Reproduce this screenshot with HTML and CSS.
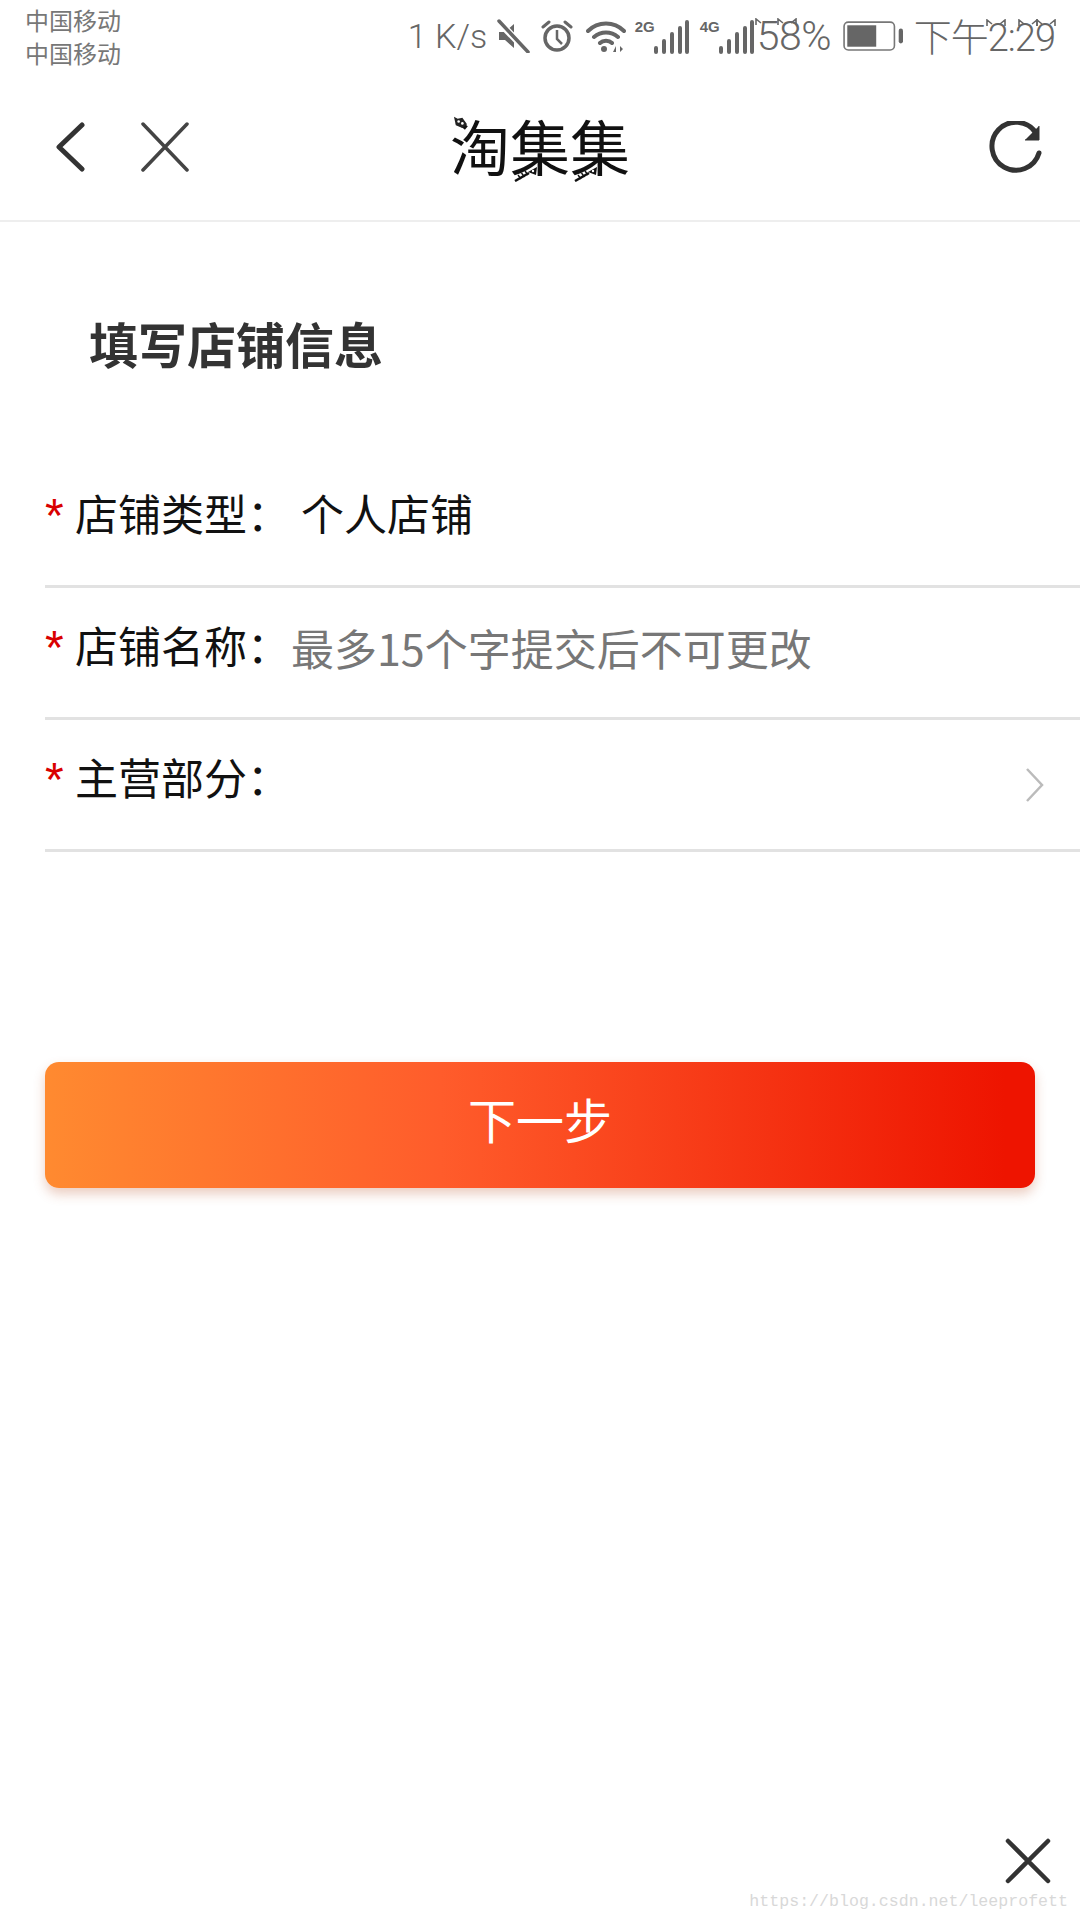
FILE: index.html
```html
<!DOCTYPE html>
<html lang="zh">
<head>
<meta charset="utf-8">
<title>淘集集</title>
<link rel="stylesheet" href="styles.css">
</head>
<body>
<div class="page">
  <div class="statusbar">
    <div class="carriers"><div>中国移动</div><div>中国移动</div></div>
    <div class="status-right">
      <span class="speed">1 K/s</span>
      <svg class="ic-mute" viewBox="0 0 34 34"><path d="M3 13h6l9-8v24l-9-8H3z" fill="#666"/><path d="M2 2l30 31" stroke="#fff" stroke-width="7"/><path d="M3 2l29 31" stroke="#666" stroke-width="3.5" stroke-linecap="round"/></svg>
      <svg class="ic-alarm" viewBox="0 0 32 32"><circle cx="16" cy="18" r="12" fill="none" stroke="#666" stroke-width="3.5"/><path d="M16 10v9l5 5" fill="none" stroke="#666" stroke-width="2.5"/><path d="M2 7l6-5M30 7l-6-5" stroke="#666" stroke-width="3" stroke-linecap="round"/></svg>
      <svg class="ic-wifi" viewBox="0 0 40 34"><path d="M2 12c10-10 26-10 36 0M8 18c7-6 17-6 24 0M14 24c3-3 9-3 12 0" fill="none" stroke="#666" stroke-width="4" stroke-linecap="round"/><circle cx="18" cy="30" r="3" fill="#666"/><path d="M27 33l3-6v6zM34 27v6l3-3z" fill="#666"/></svg>
      <span class="signal"><span class="net">2G</span><svg class="ic-bars" viewBox="0 0 36 34"><path d="M3 28v4M11 21v11M19 14v18M27 8v24M34 2v30" stroke="#666" stroke-width="4" stroke-linecap="round"/></svg></span>
      <span class="signal"><span class="net">4G</span><svg class="ic-bars" viewBox="0 0 36 34"><path d="M3 28v4M11 21v11M19 14v18M27 8v24M34 2v30" stroke="#666" stroke-width="4" stroke-linecap="round"/></svg></span>
      <span class="percent">58%
        <svg class="ears ear-8" viewBox="0 0 20 8"><path d="M1 7V1l5 4M19 7V1l-5 4" fill="none" stroke="#666" stroke-width="1.6"/></svg>
        <svg class="ears ear-5" viewBox="0 0 20 8"><path d="M1 7V1l5 4" fill="none" stroke="#666" stroke-width="1.6"/></svg>
      </span>
      <svg class="ic-battery" viewBox="0 0 56 28"><rect x="1" y="1" width="47" height="26" rx="4" fill="none" stroke="#777" stroke-width="1.5"/><rect x="4" y="4" width="27" height="20" fill="#666"/><rect x="52" y="7" width="4" height="14" rx="2" fill="#666"/></svg>
      <span class="time">下午2:29
        <svg class="ears ear-t1" viewBox="0 0 20 8"><path d="M1 7V1l5 4M19 7V1l-5 4" fill="none" stroke="#666" stroke-width="1.6"/></svg>
        <svg class="ears ear-t2" viewBox="0 0 20 8"><path d="M1 7V1l5 4M19 7V1l-5 4" fill="none" stroke="#666" stroke-width="1.6"/></svg>
        <svg class="ears ear-t3" viewBox="0 0 20 8"><path d="M1 7V1l5 4M19 7V1l-5 4" fill="none" stroke="#666" stroke-width="1.6"/></svg>
      </span>
    </div>
  </div>

  <header class="navbar">
    <div class="nav-left">
      <svg class="ic-back" viewBox="0 0 30 50"><path d="M27 3L4 25l23 22" fill="none" stroke="#333" stroke-width="5" stroke-linecap="round" stroke-linejoin="round"/></svg>
      <svg class="ic-close" viewBox="0 0 48 50"><path d="M2 2l44 46M46 2L2 48" stroke="#444" stroke-width="3.5" stroke-linecap="round"/></svg>
    </div>
    <h1 class="nav-title">淘集集
      <svg class="cat" viewBox="0 0 16 15"><path d="M1 2l4 2 5-1 5 7-5 4-7-3z" fill="#222"/><circle cx="6" cy="7" r="1.4" fill="#fff"/><circle cx="10" cy="9" r="1.4" fill="#fff"/></svg>
      <svg class="fish fish-a" viewBox="0 0 24 16"><path d="M1 15L15 7" stroke="#111" stroke-width="2.5"/><path d="M4 9l3 4M7.500 7l3 4M11 5l3 4" stroke="#111" stroke-width="1.4"/><path d="M14 6l9-5-1 8z" fill="#111"/><circle cx="19" cy="5" r="1.200" fill="#fff"/></svg>
      <svg class="fish fish-b" viewBox="0 0 24 16"><path d="M1 15L15 7" stroke="#111" stroke-width="2.5"/><path d="M4 9l3 4M7.500 7l3 4M11 5l3 4" stroke="#111" stroke-width="1.4"/><path d="M14 6l9-5-1 8z" fill="#111"/><circle cx="19" cy="5" r="1.200" fill="#fff"/></svg>
    </h1>
    <svg class="ic-refresh" viewBox="0 0 54 52"><path d="M47 12A24 24 0 1 0 50 32" fill="none" stroke="#333" stroke-width="5" stroke-linecap="round"/><path d="M50 5v14H36" fill="#333" stroke="#333" stroke-width="1"/></svg>
  </header>

  <main class="content">
    <h2 class="heading">填写店铺信息</h2>
    <div class="form">
      <div class="row">
        <span class="star">*</span>
        <span class="label">店铺类型：</span>
        <span class="value">个人店铺</span>
      </div>
      <div class="row">
        <span class="star">*</span>
        <span class="label">店铺名称：</span>
        <span class="placeholder">最多15个字提交后不可更改</span>
      </div>
      <div class="row">
        <span class="star">*</span>
        <span class="label">主营部分：</span>
        <svg class="ic-chevron" viewBox="0 0 18 34"><path d="M1 1l15 16L1 33" fill="none" stroke="#bbb" stroke-width="2.5"/></svg>
      </div>
    </div>
    <button class="next" type="button">下一步</button>
  </main>

  <footer class="footer">
    <svg class="ic-dismiss" viewBox="0 0 46 46"><path d="M3 3l40 40M43 3L3 43" stroke="#333" stroke-width="4.5" stroke-linecap="round"/></svg>
    <span class="watermark">https://blog.csdn.net/leeprofett</span>
  </footer>
</div>
</body>
</html>
```

FILE: styles.css
```css
* { box-sizing: border-box; }
html, body { margin: 0; padding: 0; background: #fff; }
body { font-family: "Noto Sans CJK SC", "Noto Sans", sans-serif; }

.page { width: 1080px; height: 1920px; display: flex; flex-direction: column; overflow: hidden; position: relative; }

.statusbar { height: 74px; padding: 3px 25px 0; display: flex; justify-content: space-between; align-items: flex-start; color: #666; }
.carriers { font-size: 24px; line-height: 33px; color: #777; }
.status-right { display: flex; align-items: center; height: 66px; font-family: Roboto, "Noto Sans CJK SC", sans-serif; font-weight: 300; color: #666; }
.speed { font-size: 34px; width: 90px; padding-left: 2px; }
.ic-mute { width: 34px; height: 34px; }
.ic-alarm { width: 32px; height: 34px; margin-left: 11px; }
.ic-wifi { width: 40px; height: 34px; margin-left: 13px; }
.signal { display: flex; align-items: flex-start; margin-left: 9px; height: 36px; }
.signal + .signal { margin-left: 11px; }
.net { font-size: 15px; font-weight: 700; line-height: 18px; width: 18px; font-family: "Liberation Sans", sans-serif; }
.ic-bars { width: 36px; height: 34px; margin-top: 2px; }
.percent { position: relative; font-size: 41px; margin-left: 3px; width: 86px; letter-spacing: -.5px; }
.ic-battery { width: 60px; height: 30px; }
.time { position: relative; font-size: 38px; margin-left: 11px; letter-spacing: -1px; white-space: nowrap; margin-top: -3px; }
.ears { position: absolute; width: 20px; height: 8px; top: 6px; }
.ear-5 { left: -2px; }
.ear-8 { left: 20px; }
.ear-t1 { left: 72px; top: 12px; }
.ear-t2 { left: 104px; top: 12px; }
.ear-t3 { left: 122px; top: 12px; }

.navbar { height: 148px; padding: 0 37px; border-bottom: 2px solid #eee; display: grid; grid-template-columns: 1fr auto 1fr; align-items: center; }
.nav-left { display: flex; align-items: center; gap: 56px; margin-left: 18px; }
.ic-back { width: 30px; height: 50px; }
.ic-close { width: 48px; height: 50px; }
.nav-title { position: relative; margin: -5px 0 0; font-size: 60px; font-weight: 400; line-height: 70px; color: #111; }
.cat { position: absolute; width: 15px; height: 14px; left: 3px; top: 5px; }
.fish { position: absolute; width: 24px; height: 16px; bottom: -2px; }
.fish-a { left: 64px; }
.fish-b { left: 124px; }
.ic-refresh { width: 54px; height: 52px; justify-self: end; }

.content { display: flex; flex-direction: column; }
.heading { margin: 0; padding: 88px 0 0 89px; height: 234px; font-size: 49px; font-weight: 700; line-height: 66px; color: #333; }
.form { margin-left: 45px; }
.row { height: 132px; padding-bottom: 17px; border-bottom: 3px solid #e2e2e2; display: flex; align-items: center; position: relative; }
.star { width: 30px; padding-top: 8px; font-size: 48px; color: #d90000; line-height: 50px; font-family: "Liberation Sans", sans-serif; }
.label { width: 216px; font-size: 43px; color: #111; white-space: nowrap; line-height: 60px; }
.value { font-size: 43px; color: #111; line-height: 60px; margin-left: 10px; }
.placeholder { font-size: 43px; color: #777; line-height: 60px; padding-top: 6px; white-space: nowrap; }
.ic-chevron { width: 18px; height: 34px; margin-left: auto; margin-right: 36px; margin-top: 17px; }

.next { margin: 210px 45px 0; padding: 0 0 14px; height: 126px; border: 0; border-radius: 14px; background: linear-gradient(90deg, #ff8a30, #ff5c2b 40%, #ee1400 97%); box-shadow: 0 6px 12px rgba(190, 90, 50, .3); color: #fff; font: 400 48px "Noto Sans CJK SC", sans-serif; }

.footer { margin-top: auto; padding: 0 29px 36px 0; display: flex; justify-content: flex-end; position: relative; }
.ic-dismiss { width: 46px; height: 46px; }
.watermark { position: absolute; right: 12px; bottom: 9px; font: 16.6px "Liberation Mono", monospace; color: #d8d8d8; }
```
